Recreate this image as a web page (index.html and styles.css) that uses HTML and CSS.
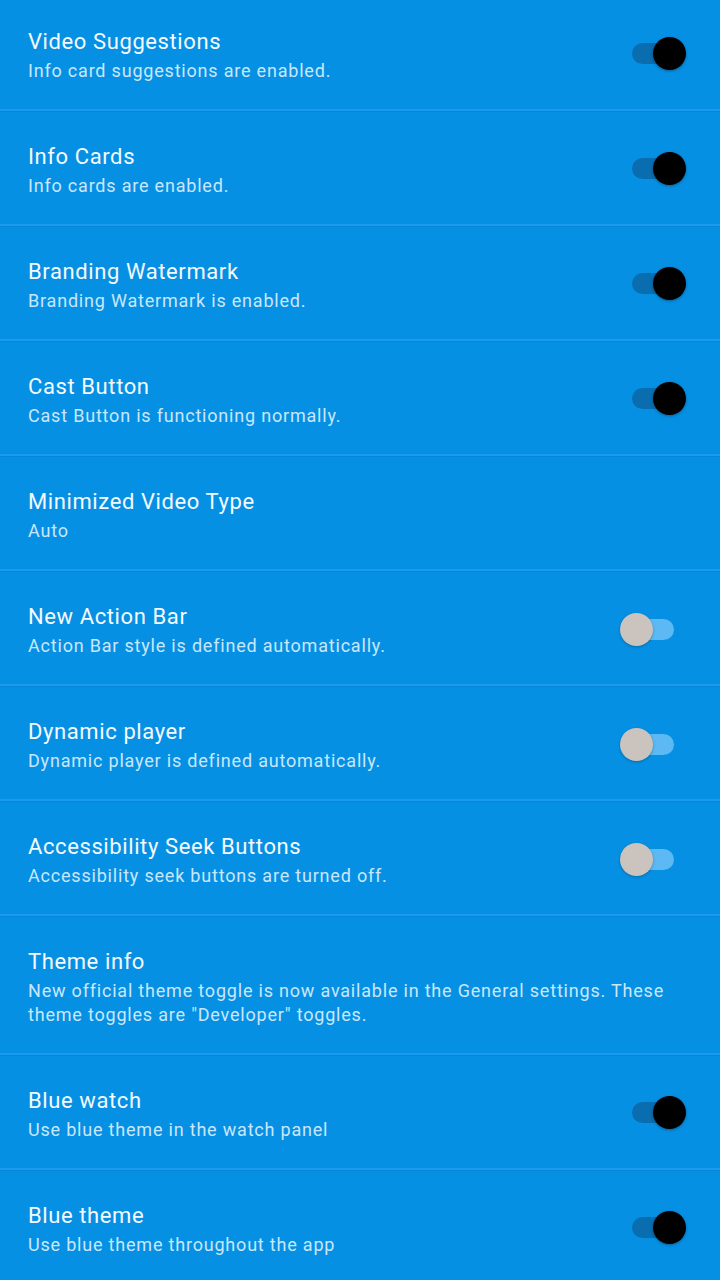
FILE: index.html
```html
<!DOCTYPE html>
<html>
<head>
<meta charset="utf-8">
<link rel="stylesheet" href="styles.css">
</head>
<body>
<div class="list">
  <div class="row first">
    <div class="text"><div class="title">Video Suggestions</div><div class="sub">Info card suggestions are enabled.</div></div>
    <div class="toggle on"><span class="track"></span><span class="thumb"></span></div>
  </div>
  <div class="row">
    <div class="text"><div class="title">Info Cards</div><div class="sub">Info cards are enabled.</div></div>
    <div class="toggle on"><span class="track"></span><span class="thumb"></span></div>
  </div>
  <div class="row">
    <div class="text"><div class="title">Branding Watermark</div><div class="sub">Branding Watermark is enabled.</div></div>
    <div class="toggle on"><span class="track"></span><span class="thumb"></span></div>
  </div>
  <div class="row">
    <div class="text"><div class="title">Cast Button</div><div class="sub">Cast Button is functioning normally.</div></div>
    <div class="toggle on"><span class="track"></span><span class="thumb"></span></div>
  </div>
  <div class="row">
    <div class="text"><div class="title">Minimized Video Type</div><div class="sub">Auto</div></div>
  </div>
  <div class="row">
    <div class="text"><div class="title">New Action Bar</div><div class="sub">Action Bar style is defined automatically.</div></div>
    <div class="toggle off"><span class="track"></span><span class="thumb"></span></div>
  </div>
  <div class="row">
    <div class="text"><div class="title">Dynamic player</div><div class="sub">Dynamic player is defined automatically.</div></div>
    <div class="toggle off"><span class="track"></span><span class="thumb"></span></div>
  </div>
  <div class="row">
    <div class="text"><div class="title">Accessibility Seek Buttons</div><div class="sub">Accessibility seek buttons are turned off.</div></div>
    <div class="toggle off"><span class="track"></span><span class="thumb"></span></div>
  </div>
  <div class="row">
    <div class="text"><div class="title">Theme info</div><div class="sub">New official theme toggle is now available in the General settings. These theme toggles are "Developer" toggles.</div></div>
  </div>
  <div class="row">
    <div class="text"><div class="title">Blue watch</div><div class="sub">Use blue theme in the watch panel</div></div>
    <div class="toggle on"><span class="track"></span><span class="thumb"></span></div>
  </div>
  <div class="row">
    <div class="text"><div class="title">Blue theme</div><div class="sub">Use blue theme throughout the app</div></div>
    <div class="toggle on"><span class="track"></span><span class="thumb"></span></div>
  </div>
</div>
</body>
</html>
```

FILE: styles.css
```css
html, body {
  margin: 0;
  padding: 0;
  background: #0690e4;
  height: 100%;
  overflow: hidden;
}
body {
  font-family: Roboto, "Noto Sans", sans-serif;
}
.list {
  display: flex;
  flex-direction: column;
}
.row {
  display: flex;
  align-items: center;
  padding: 32px 34px 26px 28px;
  border-bottom: 2px solid #1a9bef;
  box-shadow: 0 1px 0 #0487d8 inset;
}
.row.first {
  padding-top: 28px;
  box-shadow: none;
}
.text {
  flex: 1;
  min-width: 0;
}
.title {
  font-size: 22px;
  line-height: 28px;
  letter-spacing: 0.6px;
  color: #f4faff;
}
.sub {
  margin-top: 3px;
  font-size: 18px;
  line-height: 24px;
  letter-spacing: 0.8px;
  color: #c9e7fb;
  padding-right: 4px;
}
.toggle {
  position: relative;
  width: 66px;
  height: 34px;
  flex: none;
  margin-top: -4px;
  margin-left: 16px;
}
.toggle.off {
  margin-top: -2px;
}
.track {
  position: absolute;
  top: 6px;
  width: 48px;
  height: 21px;
  border-radius: 11px;
}
.thumb {
  position: absolute;
  top: 0;
  width: 33px;
  height: 33px;
  border-radius: 50%;
}
.toggle.on .track {
  left: 12px;
  background: #0a6db0;
}
.toggle.on .thumb {
  left: 33px;
  background: #000;
  box-shadow: 0 1px 3px rgba(0,0,0,0.35);
}
.toggle.off .track {
  left: 6px;
  background: #5cb9f3;
}
.toggle.off .thumb {
  left: 0;
  background: #cbc3bd;
  box-shadow: 0 1px 3px rgba(0,0,0,0.25);
}
```
